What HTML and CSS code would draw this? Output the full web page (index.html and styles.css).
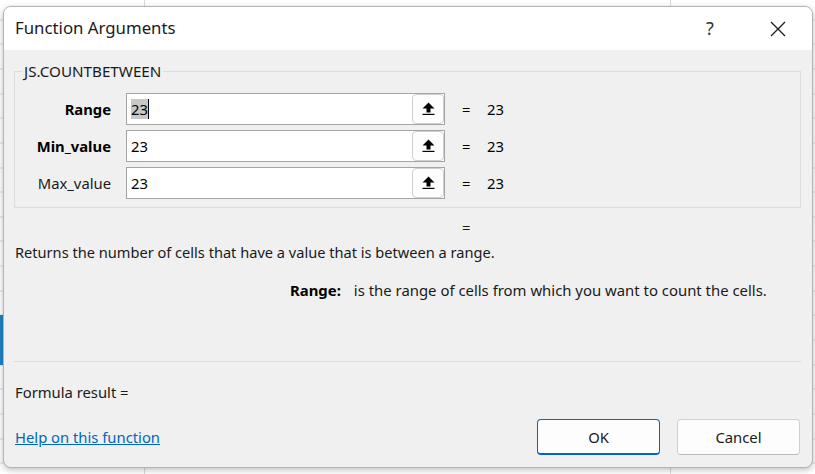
FILE: index.html
```html
<!DOCTYPE html>
<html lang="en">
<head>
<meta charset="utf-8">
<title>Function Arguments</title>
<link rel="stylesheet" href="styles.css">
</head>
<body>
<div class="dialog">
  <div class="titlebar">
    <span class="title">Function Arguments</span>
    <span class="help-btn">?</span>
    <span class="close-btn">
      <svg width="16" height="16" viewBox="0 0 16 16"><path d="M1 1 L15 15 M15 1 L1 15" stroke="#1a1a1a" stroke-width="1.3" fill="none"/></svg>
    </span>
  </div>
  <div class="body">
    <fieldset class="group">
      <legend>JS.COUNTBETWEEN</legend>
      <div class="args">
        <label class="arg-label bold">Range</label>
        <div class="input"><span class="value"><span class="sel">23</span><span class="caret"></span></span><span class="ref-btn"><svg width="13" height="13" viewBox="0 0 13 13"><path d="M6.5 0.5 L12.5 6.5 L8.5 6.5 L8.5 10.5 L4.5 10.5 L4.5 6.5 L0.5 6.5 Z" fill="#000"/><rect x="0.5" y="11.8" width="12" height="1.2" fill="#000"/></svg></span></div>
        <span class="eq">=</span><span class="res">23</span>

        <label class="arg-label bold">Min_value</label>
        <div class="input"><span class="value">23</span><span class="ref-btn"><svg width="13" height="13" viewBox="0 0 13 13"><path d="M6.5 0.5 L12.5 6.5 L8.5 6.5 L8.5 10.5 L4.5 10.5 L4.5 6.5 L0.5 6.5 Z" fill="#000"/><rect x="0.5" y="11.8" width="12" height="1.2" fill="#000"/></svg></span></div>
        <span class="eq">=</span><span class="res">23</span>

        <label class="arg-label">Max_value</label>
        <div class="input"><span class="value">23</span><span class="ref-btn"><svg width="13" height="13" viewBox="0 0 13 13"><path d="M6.5 0.5 L12.5 6.5 L8.5 6.5 L8.5 10.5 L4.5 10.5 L4.5 6.5 L0.5 6.5 Z" fill="#000"/><rect x="0.5" y="11.8" width="12" height="1.2" fill="#000"/></svg></span></div>
        <span class="eq">=</span><span class="res">23</span>
      </div>
    </fieldset>
    <div class="total-eq">=</div>
    <p class="desc">Returns the number of cells that have a value that is between a range.</p>
    <p class="arg-desc"><span class="arg-name">Range:</span><span>is the range of cells from which you want to count the cells.</span></p>
    <hr class="sep">
    <p class="formula">Formula result =</p>
    <div class="footer">
      <a class="help-link" href="#">Help on this function</a>
      <div class="buttons">
        <button class="btn primary">OK</button>
        <button class="btn">Cancel</button>
      </div>
    </div>
  </div>
</div>
</body>
</html>
```

FILE: styles.css
```css
* { box-sizing: border-box; }
html, body {
  margin: 0;
  padding: 0;
}
body {
  width: 815px;
  height: 474px;
  overflow: hidden;
  font-family: "Noto Sans", "Open Sans", sans-serif;
  color: #1a1a1a;
  background-color: #ffffff;
  background-image:
    linear-gradient(#1e84c6, #1e84c6),
    linear-gradient(90deg, transparent 144px, #d9d9d9 144px, #d9d9d9 145px, transparent 145px, transparent 670px, #d9d9d9 670px, #d9d9d9 671px, transparent 671px),
    repeating-linear-gradient(180deg, transparent 0, transparent 23.65px, #d9d9d9 23.65px, #d9d9d9 24.65px);
  background-size: 3px 50px, 815px 474px, 815px 474px;
  background-position: 0 315px, 0 0, 0 -4.5px;
  background-repeat: no-repeat, no-repeat, repeat;
  padding-top: 6px;
  padding-left: 3px;
}
.dialog {
  width: 810px;
  height: 462px;
  border: 1px solid #b4b4b4;
  border-radius: 8px;
  overflow: hidden;
  background: #f0f0f0;
  box-shadow: 0 2px 6px rgba(0, 0, 0, 0.25);
  display: flex;
  flex-direction: column;
}
.titlebar {
  height: 43px;
  flex: none;
  background: #ffffff;
  display: flex;
  align-items: center;
  padding-left: 11px;
}
.title {
  font-size: 16.8px;
  color: #1a1a1a;
  flex: 1;
  padding-bottom: 2px;
}
.help-btn {
  font-size: 18px;
  color: #333;
  width: 20px;
  margin-right: 44px;
  padding-bottom: 2px;
}
.close-btn {
  display: flex;
  margin-right: 26px;
}
.body {
  flex: 1;
  display: flex;
  flex-direction: column;
  padding: 0 11px 0 10px;
  font-size: 14.8px;
}
.group {
  margin: 13px 0 0 0;
  padding: 14px 0 8px 0;
  border: 1px solid #dcdcdc;
  min-width: 0;
}
.group legend {
  font-size: 15.2px;
  line-height: 16px;
  padding: 0 2px;
  margin-left: 7px;
  color: #1a1a1a;
}
.args {
  display: grid;
  grid-template-columns: 96px 319px 8px auto;
  column-gap: 15px;
  row-gap: 5px;
  grid-auto-rows: 32px;
  align-items: center;
}
.args .eq { margin-left: 2px; }
.args .res { margin-left: 4px; }
.arg-label {
  text-align: right;
  font-size: 14.8px;
  color: #1a1a1a;
}
.arg-label.bold { font-weight: 700; color: #000; }
.input {
  height: 32px;
  border: 1px solid #a5a5a5;
  background: #ffffff;
  display: flex;
  align-items: center;
  justify-content: space-between;
  padding: 0 0 0 4px;
}
.value {
  display: flex;
  align-items: center;
  font-size: 14.8px;
  color: #000;
}
.sel {
  background: #c8c8c8;
  line-height: 20px;
}
.caret {
  width: 1px;
  height: 20px;
  background: #000;
}
.ref-btn {
  width: 32px;
  height: 30px;
  border: 1px solid #cfcfcf;
  border-radius: 4px;
  background: #fdfdfd;
  display: flex;
  align-items: center;
  justify-content: center;
}
.ref-btn svg { margin-top: -2px; }
.eq, .res { font-size: 14.8px; color: #000; }
.total-eq {
  margin: 9px 0 0 448px;
  line-height: 20px;
}
p { margin: 0; }
.desc {
  margin: 5px 0 0 1px;
  line-height: 20px;
  font-size: 14.6px;
}
.arg-desc {
  margin: 18px 0 0 276px;
  line-height: 20px;
  display: flex;
  gap: 13px;
  font-size: 14.9px;
}
.arg-name { font-weight: 700; color: #000; }
.sep {
  margin: 61px 0 0 0;
  border: 0;
  border-top: 1px solid #dcdcdc;
  height: 0;
}
.formula {
  margin: 20px 0 0 1px;
  line-height: 20px;
}
.footer {
  margin-top: 17px;
  display: flex;
  align-items: center;
  justify-content: space-between;
}
.help-link {
  margin-left: 1px;
  color: #0067c0;
  text-decoration: underline;
}
.buttons {
  display: flex;
  gap: 17px;
  margin-right: 1px;
}
.btn {
  width: 123px;
  height: 36px;
  font-family: inherit;
  font-size: 14.8px;
  color: #1a1a1a;
  background: #fdfdfd;
  border: 1px solid #d0d0d0;
  border-bottom-color: #bcbcbc;
  border-radius: 4px;
}
.btn.primary {
  border: 1px solid #0067c0;
  border-bottom-width: 2px;
}
```
